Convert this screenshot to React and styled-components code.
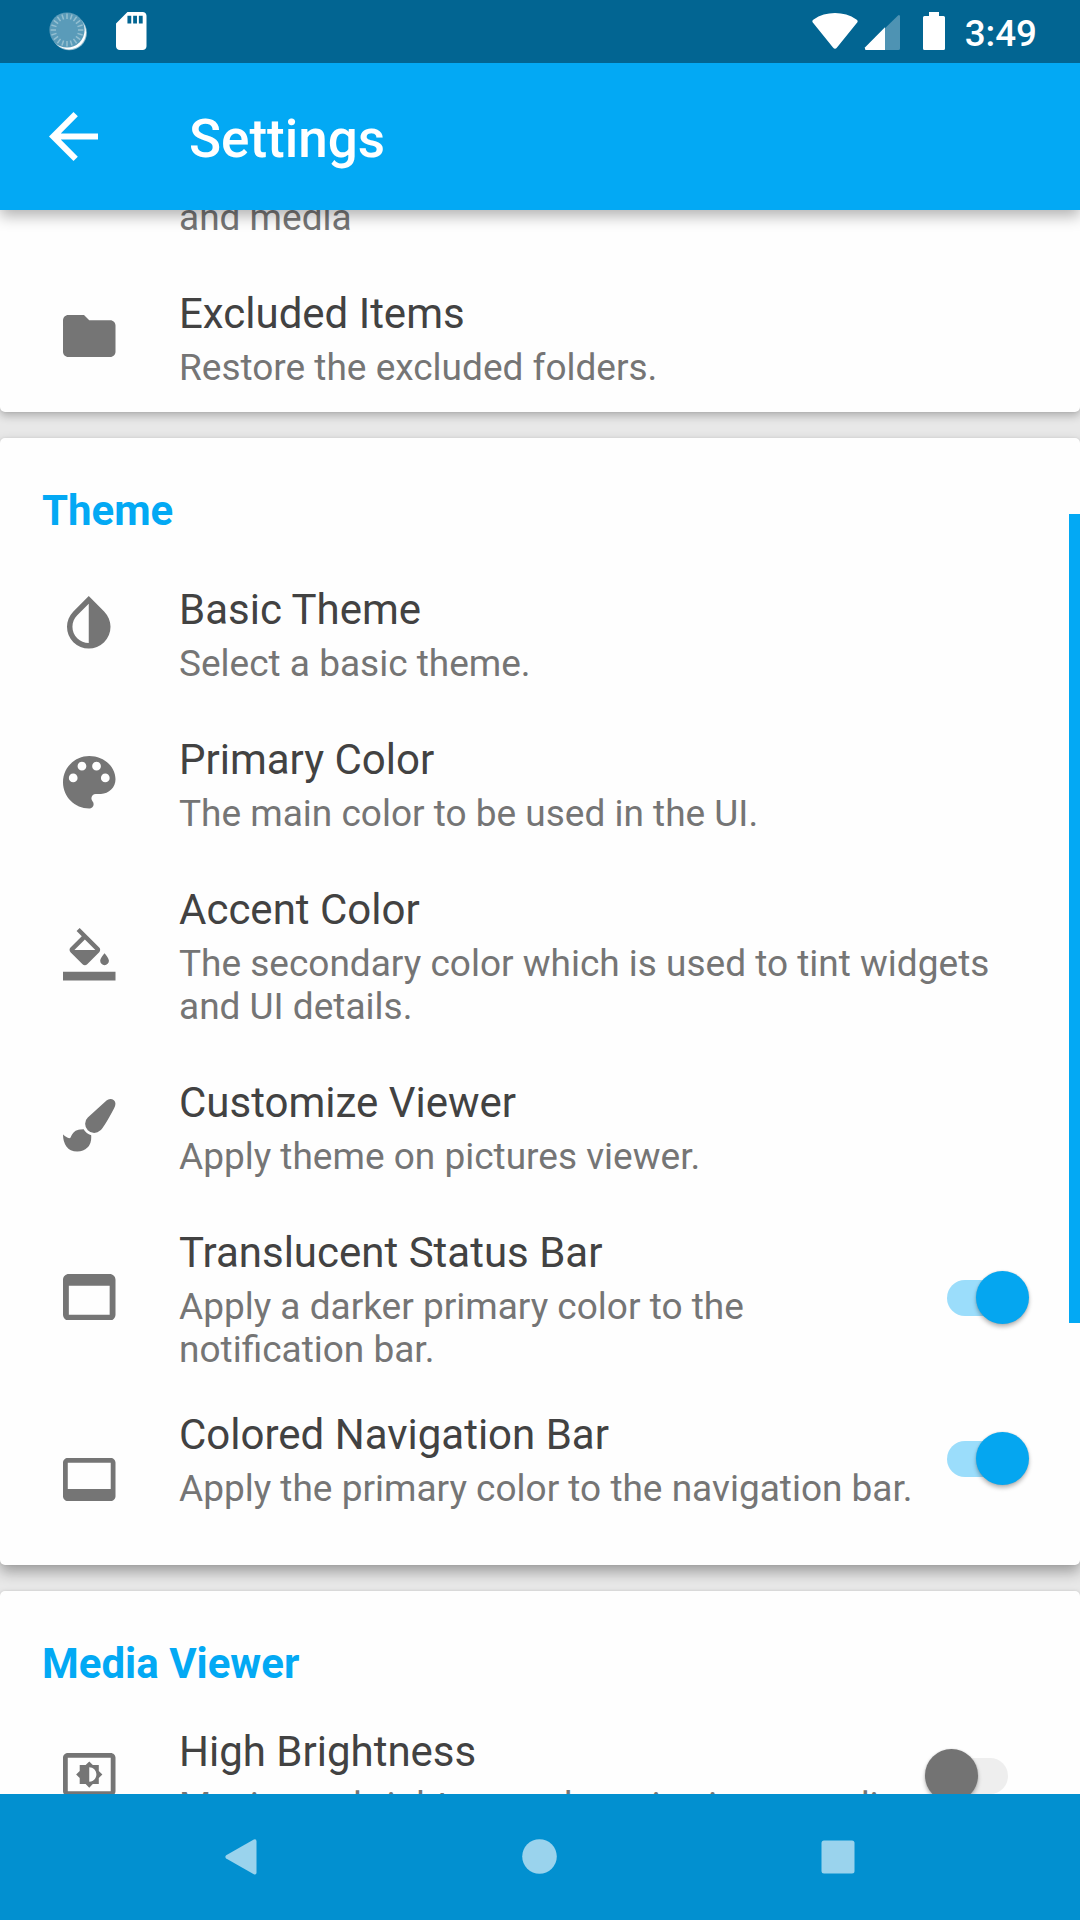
import React from "react";
import styled, { createGlobalStyle } from "styled-components";

const Global = createGlobalStyle`
  * { box-sizing: border-box; }
  html, body { margin: 0; padding: 0; background: #e8e8e8; }
  body { font-family: Roboto, "Noto Sans", sans-serif; overflow: hidden; }
  svg { display: block; flex: none; }
`;

const Screen = styled.div`
  width: 1080px;
  height: 1920px;
  display: flex;
  flex-direction: column;
  overflow: hidden;
  background: #e8e8e8;
`;

const StatusBar = styled.header`
  flex: none;
  height: 63px;
  padding: 0 42px 0 49px;
  display: flex;
  justify-content: space-between;
  background: #026592;
  z-index: 3;
`;

const StatusGroup = styled.div`
  display: flex;
  align-items: flex-start;
  padding-top: 12px;
  gap: ${(p) => p.$gap || 0}px;
`;

const Clock = styled.span`
  margin: 0 1px 0 19px;
  font-size: 36.75px;
  font-weight: 500;
  line-height: 43px;
  color: #fff;
`;

const Toolbar = styled.div`
  flex: none;
  height: 147px;
  padding: 0 48.6px;
  display: flex;
  align-items: center;
  gap: 91.4px;
  background: #03a9f4;
  box-shadow: 0 6px 14px rgba(0, 0, 0, 0.3);
  z-index: 2;
`;

const BackButton = styled.span`
  display: flex;
  padding-bottom: 1px;
`;

const ToolbarTitle = styled.h1`
  margin: 5px 0 0;
  font-size: 53px;
  font-weight: 500;
  line-height: 62px;
  color: #fff;
`;

const Content = styled.main`
  position: relative;
  flex: 1;
  min-height: 0;
  overflow: hidden;
  display: flex;
  flex-direction: column;
  justify-content: flex-start;
  gap: 26px;
`;

const Scrollbar = styled.div`
  position: absolute;
  top: 304px;
  right: 0;
  width: 11px;
  height: 809px;
  background: #03a9f4;
`;

const Card = styled.section`
  flex: none;
  display: flex;
  flex-direction: column;
  margin-top: ${(p) => p.$scrolled || 0}px;
  padding: ${(p) => p.$pad};
  background: #fefefe;
  border-radius: ${(p) => (p.$first ? "0 0 5px 5px" : "5px")};
  box-shadow: ${(p) => (p.$raised
    ? "0 7px 14px rgba(0, 0, 0, 0.32), 0 0 3px rgba(0, 0, 0, 0.08)"
    : "0 4px 9px rgba(0, 0, 0, 0.24), 0 0 3px rgba(0, 0, 0, 0.08)")};
`;

const Heading = styled.h2`
  margin: 0 0 ${(p) => p.$after}px;
  font-size: 42px;
  font-weight: 700;
  line-height: 49px;
  color: #03a9f4;
  padding-left: 42px;
`;

const Row = styled.div`
  display: flex;
  align-items: flex-start;
  padding: ${(p) => p.$top ?? 25}px 51px ${(p) => p.$bottom ?? 25}px 63px;
`;

const IconSlot = styled.div`
  flex: none;
  width: 52.5px;
  margin: ${(p) => p.$drop}px 63.5px 0 0;
  display: flex;
  justify-content: center;
  color: #757575;
`;

const Texts = styled.div`
  flex: 1;
  min-width: 0;
  display: flex;
  flex-direction: column;
  gap: 8px;
`;

const Title = styled.div`
  font-size: 42px;
  line-height: 49px;
  color: #424242;
`;

const Detail = styled.div`
  font-size: 37px;
  line-height: 43px;
  color: #757575;
`;

const SwitchBox = styled.div`
  flex: none;
  width: 104px;
  height: 53px;
  margin: ${(p) => p.$drop}px 0 0 12px;
  display: grid;
  align-items: center;
  justify-items: ${(p) => (p.$on ? "end" : "start")};
`;

const Track = styled.span`
  grid-area: 1 / 1;
  justify-self: center;
  width: 61px;
  height: 36px;
  border-radius: 18px;
  background: ${(p) => (p.$on ? "#9bddfb" : "#eeeeee")};
`;

const Thumb = styled.span`
  grid-area: 1 / 1;
  width: 53px;
  height: 53px;
  border-radius: 50%;
  background: ${(p) => (p.$on ? "#05a6f0" : "#737373")};
  box-shadow: 0 3px 4px rgba(0, 0, 0, 0.27), 0 0 2px rgba(0, 0, 0, 0.15);
`;

const NavBar = styled.nav`
  flex: none;
  height: 126px;
  padding: 0 225px 1px;
  display: flex;
  align-items: center;
  justify-content: space-between;
  background: #0290d0;
  color: #9ad3ed;
  z-index: 3;
`;

/* Each glyph is cropped to its own outline and scaled to the 52.5px icon box. */
const ICONS = {
  folder: {
    box: "2 4 20 16", w: 52.5, h: 42,
    d: "M10 4H4c-1.1 0-1.99.9-1.99 2L2 18c0 1.1.9 2 2 2h16c1.1 0 2-.9 2-2V8c0-1.1-.9-2-2-2h-8l-2-2z",
  },
  invert: {
    box: "4 2.27 16.4 19.31", w: 44.6, h: 52.5,
    d: "M17.66 7.93L12 2.27 6.34 7.93c-3.12 3.12-3.12 8.19 0 11.31C7.9 20.8 9.95 21.58 12 21.58c2.05 0 4.1-.78 5.66-2.34 3.12-3.12 3.12-8.19 0-11.31zM12 19.59c-1.6 0-3.11-.62-4.24-1.76C6.62 16.69 6 15.19 6 13.59s.62-3.11 1.76-4.24L12 5.1v14.49z",
  },
  palette: {
    box: "3 3 18 18", w: 52.5, h: 52.5,
    d: "M12 3c-4.97 0-9 4.03-9 9s4.03 9 9 9c.83 0 1.5-.67 1.5-1.5 0-.39-.15-.74-.39-1.01-.23-.26-.38-.61-.38-.99 0-.83.67-1.5 1.5-1.5H16c2.76 0 5-2.24 5-5 0-4.42-4.03-8-9-8zm-5.5 9c-.83 0-1.5-.67-1.5-1.5S5.67 9 6.5 9 8 9.67 8 10.5 7.33 12 6.5 12zm3-4C8.67 8 8 7.33 8 6.5S8.67 5 9.5 5s1.5.67 1.5 1.5S10.33 8 9.5 8zm5 0c-.83 0-1.5-.67-1.5-1.5S13.67 5 14.5 5s1.5.67 1.5 1.5S15.33 8 14.5 8zm3 4c-.83 0-1.5-.67-1.5-1.5S16.67 9 17.5 9s1.5.67 1.5 1.5-.67 1.5-1.5 1.5z",
  },
  fill: {
    box: "0 0 24 24", w: 52.5, h: 52.5,
    d: "M16.56 8.94L7.62 0 6.21 1.41l2.38 2.38-5.15 5.15c-.59.59-.59 1.54 0 2.12l5.5 5.5c.29.29.68.44 1.06.44s.77-.15 1.06-.44l5.5-5.5c.59-.58.59-1.53 0-2.12zM5.21 10L10 5.21 14.79 10H5.21zM19 11.5s-2 2.17-2 3.5c0 1.1.9 2 2 2s2-.9 2-2c0-1.33-2-3.5-2-3.5zM0 20h24v4H0v-4z",
  },
  brush: {
    box: "0 0 1792 1792", w: 52.5, h: 52.5,
    d: "M1615 0q70 0 122.5 46.5t52.5 116.5q0 63-45 151-332 629-465 752-97 91-218 91-126 0-216.5-92.5t-90.5-219.5q0-128 92-212l638-579q59-54 130-54zm-909 1034q39 76 106.5 130t150.5 76l1 71q4 213-129.5 347t-348.5 134q-123 0-218-46.5t-152.5-127.5-86.5-183-29-220q7 5 41 30t62 44.5 59 36.5 46 17q41 0 55-37 25-66 57.5-112.5t69.5-76 88-47.5 103-25.5 125-10.5z",
  },
  topBar: {
    box: "3 4 18 16", w: 52.5, h: 46.7,
    d: "M19 4H5c-1.11 0-2 .9-2 2v12c0 1.1.89 2 2 2h14c1.1 0 2-.9 2-2V6c0-1.1-.89-2-2-2zm0 14H5V8h14v10z",
  },
  bottomBar: {
    box: "1 3 22 18", w: 52.5, h: 43,
    d: "M21 3H3c-1.11 0-2 .89-2 2v14c0 1.1.89 2 2 2h18c1.1 0 2-.9 2-2V5c0-1.11-.9-2-2-2zm0 13H3V5h18v11z",
  },
  brightness: {
    box: "1 3 22 18", w: 52.5, h: 43,
    d: "M21 3H3c-1.1 0-2 .9-2 2v14c0 1.1.9 2 2 2h18c1.1 0 2-.9 2-2V5c0-1.1-.9-2-2-2zm0 16.01H3V4.99h18v14.02zM8 16h2.5l1.5 1.5 1.5-1.5H16v-2.5l1.5-1.5-1.5-1.5V8h-2.5L12 6.5 10.5 8H8v2.5L6.5 12 8 13.5V16zm4-7c1.66 0 3 1.34 3 3s-1.34 3-3 3V9z",
  },
};

function Icon({ name }) {
  const { box, w, h, d } = ICONS[name];
  return (
    <svg width={w} height={h} viewBox={box} fill="currentColor">
      <path d={d} />
    </svg>
  );
}

function Switch({ on, drop }) {
  return (
    <SwitchBox $on={on} $drop={drop} role="switch" aria-checked={on}>
      <Track $on={on} />
      <Thumb $on={on} />
    </SwitchBox>
  );
}

function Setting({ icon, drop, title, detail, top, bottom, toggle }) {
  return (
    <Row $top={top} $bottom={bottom}>
      <IconSlot $drop={drop}>{icon && <Icon name={icon} />}</IconSlot>
      <Texts>
        {title && <Title>{title}</Title>}
        <Detail>{detail}</Detail>
      </Texts>
      {toggle && <Switch {...toggle} />}
    </Row>
  );
}

const ticks = Array.from({ length: 20 }, (_, i) => i * 18);

function SyncIcon() {
  return (
    <svg width="38" height="39" viewBox="0 0 38 39">
      <circle cx="20.3" cy="20.7" r="17.6" fill="#8ebacd" />
      <circle cx="20" cy="20.4" r="17" fill="#fff" />
      <circle cx="18" cy="18" r="17.6" fill="#5a9bb9" />
      {ticks.map((a) => (
        <line
          key={a} x1="18" y1="1.6" x2="18" y2="7"
          stroke="#94bfd1" strokeWidth="1.5"
          transform={`rotate(${a} 18 18)`}
        />
      ))}
    </svg>
  );
}

export default function App() {
  return (
    <>
      <Global />
      <Screen>
        <StatusBar>
          <StatusGroup $gap={29}>
            <SyncIcon />
            <svg width="30.5" height="38" viewBox="4 2 16 20" fill="#fff" preserveAspectRatio="none">
              <path d="M18 2h-8L4.02 8 4 20c0 1.1.9 2 2 2h12c1.1 0 2-.9 2-2V4c0-1.1-.9-2-2-2zm-6 6h-2V4h2v4zm3 0h-2V4h2v4zm3 0h-2V4h2v4z" />
            </svg>
          </StatusGroup>
          <StatusGroup>
            <svg width="134" height="39" viewBox="812 12 134 39" fill="#fff">
              <path d="M812.6 22.3Q811.8 20.5 813.6 19.4C826 11 844 11 856.4 19.4Q858.2 20.5 857.4 22.3L837 47.6Q835 50 833 47.6Z" />
              <path d="M898.3 15.2Q900 14.4 900 16.6V48.4Q900 50 898.4 50H866Q864.3 49.6 865.2 47.6Z" fillOpacity=".3" />
              <path d="M885 27.3V50H866.2Q864.3 49.6 865.2 47.2Z" />
              <path d="M929 12h10v4h4.5q1.5 0 1.5 1.5v31q0 1.5-1.5 1.5h-19q-1.5 0-1.5-1.5v-31q0-1.5 1.5-1.5h4.5z" />
            </svg>
            <Clock>3:49</Clock>
          </StatusGroup>
        </StatusBar>

        <Toolbar>
          <BackButton>
            <svg width="49" height="49" viewBox="4 4 16 16" fill="#fff">
              <path d="M20 11H7.83l5.59-5.59L12 4l-8 8 8 8 1.41-1.41L7.83 13H20v-2z" />
            </svg>
          </BackButton>
          <ToolbarTitle>Settings</ToolbarTitle>
        </Toolbar>

        <Content>
          <Card $first $pad="0" $scrolled={-14}>
            <Setting drop={0} detail="and media" top={0} bottom={25} />
            <Setting icon="folder" drop={26} title="Excluded Items" detail="Restore the excluded folders." bottom={23} />
          </Card>

          <Card $raised $pad="48px 0 0">
            <Heading $after={25}>Theme</Heading>
            <Setting icon="invert" drop={11} title="Basic Theme" detail="Select a basic theme." />
            <Setting icon="palette" drop={21} title="Primary Color" detail="The main color to be used in the UI." />
            <Setting
              icon="fill" drop={43} title="Accent Color"
              detail="The secondary color which is used to tint widgets and UI details."
            />
            <Setting icon="brush" drop={21} title="Customize Viewer" detail="Apply theme on pictures viewer." />
            <Setting
              icon="topBar" drop={45.6} title="Translucent Status Bar" bottom={19}
              detail="Apply a darker primary color to the notification bar."
              toggle={{ on: true, drop: 43 }}
            />
            <Setting
              icon="bottomBar" drop={47.5} title="Colored Navigation Bar" top={20} bottom={55}
              detail="Apply the primary color to the navigation bar."
              toggle={{ on: true, drop: 22 }}
            />
          </Card>

          <Card $pad="48px 0 0">
            <Heading $after={20}>Media Viewer</Heading>
            <Setting
              icon="brightness" drop={26.3} title="High Brightness" top={19}
              detail="Maximum brightness when viewing a media."
              toggle={{ on: false, drop: 22 }}
            />
          </Card>
          <Scrollbar />
        </Content>

        <NavBar>
          <svg width="32" height="36" viewBox="0 0 32 36" fill="currentColor">
            <path d="M1.2 16.3 28.8.5Q31.5-.5 31.5 2.5V33.5Q31.5 36.3 28.8 35.3L1.2 19.5Q-.5 17.9 1.2 16.3Z" />
          </svg>
          <svg width="35" height="35" viewBox="0 0 35 35" fill="currentColor">
            <circle cx="17.5" cy="17.5" r="17.3" />
          </svg>
          <svg width="34" height="34" viewBox="0 0 34 34" fill="currentColor">
            <rect x=".5" y=".5" width="33" height="33" rx="2.5" />
          </svg>
        </NavBar>
      </Screen>
    </>
  );
}
